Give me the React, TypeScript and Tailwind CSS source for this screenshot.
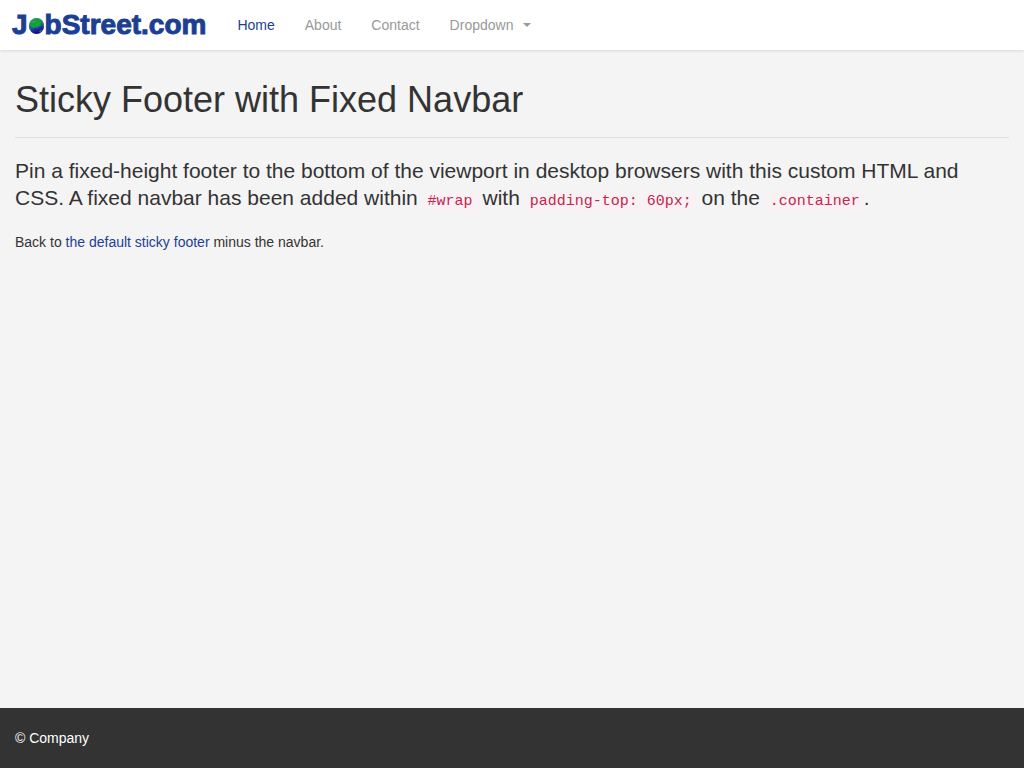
const navLinks = [
  { label: "Home", active: true },
  { label: "About", active: false },
  { label: "Contact", active: false },
];

function Globe() {
  return (
    <svg viewBox="0 0 17 18" className="mt-0.5 h-[18px] w-[17px] shrink-0" aria-hidden="true">
      <defs>
        <linearGradient id="sea" x1="0" y1="0" x2="0.3" y2="1">
          <stop offset="0" stopColor="#5f8fa8" />
          <stop offset="0.45" stopColor="#3a62b0" />
          <stop offset="1" stopColor="#12079a" />
        </linearGradient>
      </defs>
      <ellipse cx="8.5" cy="9" rx="7.6" ry="8" fill="url(#sea)" />
      <path
        d="M2.6 5.4C3.8 2.8 6 1.3 8.8 1.2c2 0 3.6.7 4.8 2l-.6 2.6-.2 2.6-1.6 1.4-1.2-.6-.8 2.2-1.6-1.6-2 1.6-1.6-1.4-1.8-.8z"
        fill="#12a03c"
      />
      <path d="M14 4.4c1.2 1.4 1.9 3.2 1.8 5.4l-1.2-1.4z" fill="#12a03c" />
      <path d="M11 14.6l2.6-2 .4 1-2 2zM1.2 10.6l1.4 1.4 1.4 3-2-2.2z" fill="#159447" />
      <path d="M4.5 5.2l1.8-1 1 .5M9 7.6l1.6-.8" stroke="#55bd75" strokeWidth=".7" fill="none" />
    </svg>
  );
}

function Logo() {
  return (
    <a
      href="#"
      aria-label="JobStreet.com"
      className="flex items-center text-[28px] leading-[50px] font-bold text-[#1c3f94] [-webkit-text-stroke:1px_#1c3f94]"
    >
      <span>J</span>
      <Globe />
      <span>bStreet.com</span>
    </a>
  );
}

function Code({ children }: { children: string }) {
  return (
    <code className="rounded bg-[#f9f2f4] px-1 py-0.5 font-['Liberation_Mono',monospace] text-[15px] leading-4 whitespace-nowrap text-[#c7254e]">
      {children}
    </code>
  );
}

export default function App() {
  return (
    <div className="flex min-h-screen flex-col bg-[#f4f4f4] font-['Liberation_Sans',Arial,sans-serif] text-sm leading-5 text-[#333]">
      <header className="sticky top-0 flex h-[50px] items-center bg-white pl-3 shadow-[0_1px_3px_rgba(0,0,0,0.12)]">
        <Logo />
        <nav className="ml-4 flex items-center">
          {navLinks.map((link) => (
            <a
              key={link.label}
              href="#"
              className={link.active ? "px-[15px] py-[15px] text-[#1c3f94]" : "px-[15px] py-[15px] text-[#999]"}
            >
              {link.label}
            </a>
          ))}
          <button type="button" className="flex items-center gap-[10px] px-[15px] py-[15px] text-[#999]">
            Dropdown
            <svg viewBox="0 0 8 4" className="h-1 w-2" aria-hidden="true">
              <path d="M0 0h8L4 4z" fill="currentColor" />
            </svg>
          </button>
        </nav>
      </header>

      <main className="flex-1 px-[15px] pt-[30px]">
        <h1 className="border-b border-[#ddd] pb-[17px] text-[36px] leading-10">
          Sticky Footer with Fixed Navbar
        </h1>
        <p className="mt-[19px] text-[21px] leading-[27px]">
          Pin a fixed-height footer to the bottom of the viewport in desktop browsers with this custom HTML and CSS. A
          fixed navbar has been added within <Code>#wrap</Code> with <Code>padding-top: 60px;</Code> on the{" "}
          <Code>.container</Code>.
        </p>
        <p className="mt-[21px]">
          Back to{" "}
          <a href="#" className="text-[#1c3f94]">
            the default sticky footer
          </a>{" "}
          minus the navbar.
        </p>
      </main>

      <footer className="flex h-[60px] items-center bg-[#333] px-[15px] text-white">
        <p>© Company</p>
      </footer>
    </div>
  );
}
